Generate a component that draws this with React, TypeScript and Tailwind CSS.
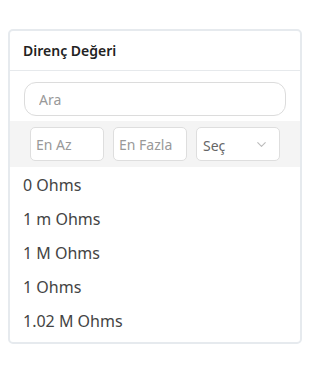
import { ChevronDown } from 'lucide-react';

const values = ['0 Ohms', '1 m Ohms', '1 M Ohms', '1 Ohms', '1.02 M Ohms'];

export default function App() {
  return (
    <div className="min-h-screen bg-white pt-[29px] pl-2 font-['Noto_Sans',sans-serif]">
      <div className="w-[294px] rounded-[5px] border-2 border-[#e6eaee] bg-white">
        {/* Header */}
        <div className="flex h-[40px] items-center border-b border-[#e6e9ec] px-[13px]">
          <span className="text-[14px] font-semibold text-[#222]">Direnç Değeri</span>
        </div>

        {/* Search */}
        <div className="px-[14px] pt-[11px] pb-[5px]">
          <input
            placeholder="Ara"
            className="h-[34px] w-full rounded-[12px] border border-[#dcdcdc] px-[14px] text-[14px] text-[#555] outline-none placeholder:text-[#999]"
          />
        </div>

        {/* Range filters */}
        <div className="flex gap-[9px] bg-[#f4f4f4] px-[20px] py-[6px]">
          <input
            placeholder="En Az"
            className="h-[34px] w-[74px] rounded-[5px] border border-[#dedede] bg-white px-[5px] text-[14px] outline-none placeholder:text-[#999]"
          />
          <input
            placeholder="En Fazla"
            className="h-[34px] w-[74px] rounded-[5px] border border-[#dedede] bg-white px-[5px] text-[14px] outline-none placeholder:text-[#999]"
          />
          <div className="flex h-[34px] w-[85px] items-center justify-between rounded-[5px] border border-[#dedede] bg-white pl-[6px] pr-[10px]">
            <span className="pt-[2px] text-[14px] text-[#666]">Seç</span>
            <ChevronDown className="h-[15px] w-[15px] text-[#bbb]" strokeWidth={1.75} />
          </div>
        </div>

        {/* Values */}
        <ul className="pt-[1px] pb-[4px]">
          {values.map((v) => (
            <li key={v} className="flex h-[34px] items-center px-[13px] text-[16px] text-[#444]">
              {v}
            </li>
          ))}
        </ul>
      </div>
    </div>
  );
}
